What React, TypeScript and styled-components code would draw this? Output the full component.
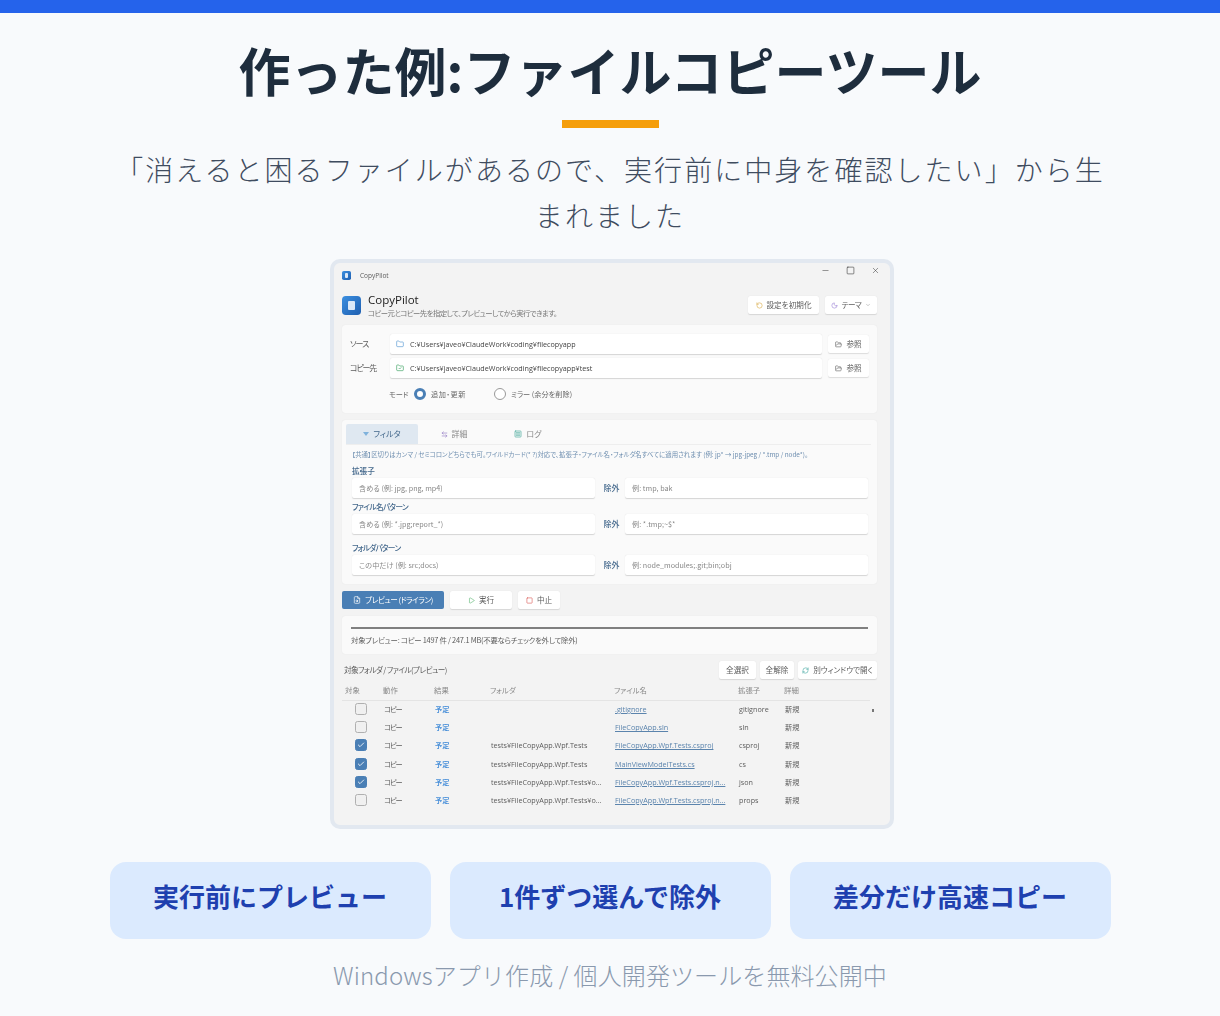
import React from "react";
import styled, { createGlobalStyle } from "styled-components";
import {
  ArrowLeftRight,
  Check,
  ChevronDown,
  FileSearch,
  Folder,
  FolderCheck,
  FolderOpen,
  Minus,
  Moon,
  Play,
  RefreshCw,
  RotateCcw,
  Square,
  SquareMenu,
  X,
} from "lucide-react";

const Global = createGlobalStyle`
  html, body {
    margin: 0;
    background: #f8fafc;
    font-family: "Noto Sans CJK JP", "Noto Sans", sans-serif;
  }
`;

const Page = styled.div`
  height: 1016px;
  overflow: hidden;
  box-sizing: border-box;
  border-top: 13px solid #2563eb;
  display: flex;
  flex-direction: column;
  align-items: center;
`;

const Title = styled.h1`
  margin: 23px 0 0;
  font-size: 52px;
  line-height: 68px;
  font-weight: 700;
  color: #1e2d3d;
`;

const Accent = styled.div`
  width: 97px;
  height: 8px;
  margin-top: 16px;
  background: #f59e0b;
`;

const Lead = styled.p`
  width: 1000px;
  margin: 18px 0 0;
  text-align: center;
  font-size: 28px;
  line-height: 46px;
  letter-spacing: 2.05px;
  font-weight: 300;
  color: #3f4c5f;
`;

const Shot = styled.div`
  width: 564px;
  height: 570px;
  box-sizing: border-box;
  margin: 21px 0 0 4px;
  border: 4px solid #e2e8f0;
  border-radius: 10px;
  background: #f3f3f3;
  color: #5c5c5c;
  font-size: 8px;
  line-height: 12px;
  font-feature-settings: "palt";
  display: flex;
  flex-direction: column;
  padding: 0 13px 0 8px;
  overflow: hidden;
  filter: blur(0.3px);
`;

const Kana = styled.span<{ $ls: number }>`
  letter-spacing: ${(p) => p.$ls}px;
  white-space: nowrap;
`;

const TitleBar = styled.div`
  height: 25px;
  flex: none;
  display: flex;
  align-items: center;
  gap: 9px;
  font-size: 6.5px;
  font-family: "Open Sans", sans-serif;
`;

const WindowButtons = styled.div`
  margin-left: auto;
  margin-right: -3px;
  margin-top: -11px;
  display: flex;
  gap: 16px;
  color: #222;
`;

const AppIcon = styled.div<{ $size: number }>`
  width: ${(p) => p.$size}px;
  height: ${(p) => p.$size}px;
  flex: none;
  border-radius: ${(p) => p.$size / 5}px;
  background: linear-gradient(135deg, #3b8fe0, #1f5fb0);
  display: flex;
  align-items: center;
  justify-content: center;
  &::after {
    content: "";
    width: 40%;
    height: 52%;
    background: #dbe9f8;
    border-radius: 1px;
  }
`;

const Header = styled.div`
  height: 29px;
  flex: none;
  margin-top: 8px;
  display: flex;
  gap: 7px;
  align-items: flex-start;
`;

const HeaderText = styled.div`
  margin-top: -3px;
`;

const AppName = styled.div`
  font-size: 11.5px;
  line-height: 14px;
  color: #222;
  font-family: "Open Sans", sans-serif;
`;

const AppSub = styled.div`
  font-size: 7.4px;
  line-height: 11px;
  letter-spacing: -0.55px;
  color: #777;
`;

const HeaderActions = styled.div`
  margin-left: auto;
  display: flex;
  gap: 6px;
`;

const Btn = styled.div<{ $w: number; $h?: number }>`
  width: ${(p) => p.$w}px;
  height: ${(p) => p.$h ?? 18}px;
  box-sizing: border-box;
  display: flex;
  flex: none;
  align-items: center;
  justify-content: center;
  gap: 4px;
  background: #fff;
  border-radius: 2px;
  font-size: 7.6px;
  color: #5c5c5c;
  white-space: nowrap;
  box-shadow: 0 0.5px 1px rgba(0, 0, 0, 0.12);
`;

const PrimaryBtn = styled(Btn)`
  background: #4a7fb5;
  color: #fff;
  box-shadow: none;
`;

const Panel = styled.div`
  flex: none;
  background: #fafafa;
  border-radius: 3px;
  box-shadow: 0 0 1px rgba(0, 0, 0, 0.1);
`;

const SourcePanel = styled(Panel)`
  height: 88px;
  box-sizing: border-box;
  padding: 9px 8px 0;
  display: flex;
  flex-direction: column;
  gap: 4px;
`;

const PathRow = styled.div`
  display: flex;
  align-items: center;
`;

const PathLabel = styled.div`
  width: 40px;
  flex: none;
`;

const PathInput = styled.div`
  flex: 1;
  height: 20px;
  margin-right: 6px;
  padding-left: 6px;
  display: flex;
  align-items: center;
  gap: 6px;
  background: #fff;
  border-radius: 2px;
  box-shadow: 0 0.5px 1px rgba(0, 0, 0, 0.15);
  font-family: "Open Sans", sans-serif;
  font-size: 7.2px;
  color: #444;
`;

const ModeRow = styled.div`
  display: flex;
  align-items: center;
  margin: 6px 0 0 39px;
  font-size: 7.2px;
  color: #666;
`;

const ModeLabel = styled.span`
  width: 25px;
`;

const Radio = styled.span<{ $on?: boolean }>`
  width: 12px;
  height: 12px;
  box-sizing: border-box;
  border-radius: 50%;
  margin-right: 5px;
  background: #fff;
  border: ${(p) => (p.$on ? "3px solid #4a7fb5" : "1px solid #999")};
`;

const ModeOption = styled.span`
  width: 63px;
  letter-spacing: 0.5px;
`;

const FilterPanel = styled(Panel)`
  height: 164px;
  margin-top: 7px;
  padding: 4px 9px 0 4px;
  box-sizing: border-box;
`;

const Tabs = styled.div`
  display: flex;
  height: 20px;
  border-bottom: 1px solid #eee;
  margin-right: -3px;
`;

const Tab = styled.div<{ $on?: boolean; $w: number }>`
  width: ${(p) => p.$w}px;
  display: flex;
  align-items: center;
  justify-content: center;
  gap: 4px;
  background: ${(p) => (p.$on ? "#dfe8f1" : "transparent")};
  color: ${(p) => (p.$on ? "#44688c" : "#888")};
  border-radius: 2px 2px 0 0;
`;

const FilterBody = styled.div`
  padding-left: 6px;
`;

const Info = styled.div`
  margin-top: 5px;
  font-size: 6.4px;
  line-height: 10px;
  color: #6f8fb0;
  white-space: nowrap;
`;

const GroupLabel = styled.div<{ $top: number; $ls: number }>`
  margin-top: ${(p) => p.$top}px;
  height: 11px;
  font-size: 7.6px;
  line-height: 11px;
  font-weight: 500;
  letter-spacing: ${(p) => p.$ls}px;
  color: #44688c;
`;

const InputRow = styled.div`
  display: flex;
  align-items: center;
  margin-top: 2px;
`;

const Field = styled.div<{ $w: number }>`
  width: ${(p) => p.$w}px;
  height: 20px;
  box-sizing: border-box;
  padding-left: 7px;
  display: flex;
  align-items: center;
  background: #fff;
  border-radius: 2px;
  box-shadow: 0 0.5px 1px rgba(0, 0, 0, 0.15);
  font-size: 7.2px;
  color: #888;
`;

const Exclude = styled.div`
  width: 30px;
  box-sizing: border-box;
  padding-left: 3px;
  text-align: center;
  font-weight: 500;
  color: #44688c;
`;

const ActionRow = styled.div`
  display: flex;
  gap: 6px;
  margin-top: 7px;
  flex: none;
`;

const ProgressPanel = styled(Panel)`
  height: 38px;
  margin-top: 7px;
  padding: 11px 9px 0;
  box-sizing: border-box;
`;

const ProgressBar = styled.div`
  height: 2px;
  background: #808080;
`;

const ProgressText = styled.div`
  margin-top: 5px;
  font-size: 7.4px;
  letter-spacing: -0.25px;
  white-space: nowrap;
`;

const ListHeader = styled.div`
  display: flex;
  align-items: center;
  gap: 4px;
  height: 18px;
  margin-top: 7px;
  padding-left: 2px;
  flex: none;
`;

const ListTitle = styled.div`
  margin-right: auto;
  font-size: 7.6px;
  letter-spacing: -0.55px;
`;

const Grid = styled.div`
  display: grid;
  grid-template-columns: 38px 51px 56px 124px 124px 46px 1fr;
  margin-right: 7px;
  padding-left: 3px;
  white-space: nowrap;
`;

const HeadRow = styled(Grid)`
  height: 21px;
  flex: none;
  align-items: center;
  border-bottom: 1px solid #e4e4e4;
  color: #888;
  font-size: 7.4px;
`;

const Row = styled(Grid)`
  height: 18.2px;
  align-items: center;
  font-size: 7.2px;
  color: #5c5c5c;
`;

const Rows = styled.div`
  flex: none;
  margin-top: -1px;
  position: relative;
`;

const Cell = styled.div`
  padding-left: 1px;
  font-family: "Open Sans", "Noto Sans CJK JP", sans-serif;
`;

const RowCheck = styled.div<{ $on?: boolean }>`
  width: 12px;
  height: 12px;
  margin-left: 10px;
  box-sizing: border-box;
  border-radius: 2.5px;
  background: ${(p) => (p.$on ? "#4a7fb5" : "#f0f0f0")};
  border: 1.2px solid ${(p) => (p.$on ? "#4a7fb5" : "#b0b0b0")};
  color: #fff;
  display: flex;
  align-items: center;
  justify-content: center;
`;

const Status = styled.div`
  font-weight: 700;
  color: #4a90d9;
  padding-left: 1px;
`;

const FileLink = styled(Cell)`
  color: #5b84ad;
  text-decoration: underline;
`;

const ScrollDot = styled.div`
  position: absolute;
  right: 3px;
  top: 9px;
  width: 2px;
  height: 3px;
  background: #777;
`;

const Features = styled.div`
  display: flex;
  gap: 19px;
  margin-top: 33px;
  width: 1001px;
  flex: none;
`;

const Feature = styled.div`
  flex: 1;
  height: 77px;
  box-sizing: border-box;
  padding-bottom: 10px;
  display: flex;
  align-items: center;
  justify-content: center;
  border-radius: 16px;
  background: #dbeafe;
  color: #1e40af;
  font-size: 26px;
  font-weight: 700;
`;

const Footer = styled.div`
  margin-top: 18px;
  font-size: 24px;
  line-height: 36px;
  letter-spacing: 0.1px;
  font-weight: 300;
  color: #8a99ae;
`;

const rows = [
  { on: false, folder: "", file: ".gitignore", ext: "gitignore" },
  { on: false, folder: "", file: "FileCopyApp.sln", ext: "sln" },
  { on: true, folder: "tests¥FileCopyApp.Wpf.Tests", file: "FileCopyApp.Wpf.Tests.csproj", ext: "csproj" },
  { on: true, folder: "tests¥FileCopyApp.Wpf.Tests", file: "MainViewModelTests.cs", ext: "cs" },
  { on: true, folder: "tests¥FileCopyApp.Wpf.Tests¥o...", file: "FileCopyApp.Wpf.Tests.csproj.n...", ext: "json" },
  { on: false, folder: "tests¥FileCopyApp.Wpf.Tests¥o...", file: "FileCopyApp.Wpf.Tests.csproj.n...", ext: "props" },
];

const filters = [
  { label: "拡張子", top: 5, ls: 0, include: "含める (例: jpg, png, mp4)", exclude: "例: tmp, bak" },
  { label: "ファイル名パターン", top: 3, ls: -0.6, include: "含める (例: *.jpg;report_*)", exclude: "例: *.tmp;~$*" },
  { label: "フォルダパターン", top: 7.5, ls: -0.7, include: "この中だけ (例: src;docs)", exclude: "例: node_modules;.git;bin;obj" },
];

export default function App() {
  return (
    <Page>
      <Global />
      <Title>作った例:ファイルコピーツール</Title>
      <Accent />
      <Lead>「消えると困るファイルがあるので、実行前に中身を確認したい」から生まれました</Lead>

      <Shot>
        <TitleBar>
          <AppIcon $size={9} />
          CopyPilot
          <WindowButtons>
            <Minus size={9} strokeWidth={1.2} />
            <Square size={9} strokeWidth={1.4} />
            <X size={9} strokeWidth={1.2} />
          </WindowButtons>
        </TitleBar>
        <Header>
          <AppIcon $size={19} />
          <HeaderText>
            <AppName>CopyPilot</AppName>
            <AppSub>コピー元とコピー先を指定して、プレビューしてから実行できます。</AppSub>
          </HeaderText>
          <HeaderActions>
            <Btn $w={71}>
              <RotateCcw size={7} color="#d9a83f" />
              設定を初期化
            </Btn>
            <Btn $w={52}>
              <Moon size={7} color="#9a7fd6" />
              <Kana $ls={-0.5}>テーマ</Kana>
              <ChevronDown size={6} color="#999" />
            </Btn>
          </HeaderActions>
        </Header>

        <SourcePanel>
          <PathRow>
            <PathLabel>
              <Kana $ls={-1}>ソース</Kana>
            </PathLabel>
            <PathInput>
              <Folder size={8} color="#5b9bd5" />
              C:¥Users¥javeo¥ClaudeWork¥coding¥filecopyapp
            </PathInput>
            <Btn $w={41}>
              <FolderOpen size={7} />
              参照
            </Btn>
          </PathRow>
          <PathRow>
            <PathLabel>
              <Kana $ls={-1.2}>コピー先</Kana>
            </PathLabel>
            <PathInput>
              <FolderCheck size={8} color="#3fa565" />
              C:¥Users¥javeo¥ClaudeWork¥coding¥filecopyapp¥test
            </PathInput>
            <Btn $w={41}>
              <FolderOpen size={7} />
              参照
            </Btn>
          </PathRow>
          <ModeRow>
            <ModeLabel>モード</ModeLabel>
            <Radio $on />
            <ModeOption>追加・更新</ModeOption>
            <Radio />
            ミラー (余分を削除)
          </ModeRow>
        </SourcePanel>

        <FilterPanel>
          <Tabs>
            <Tab $on $w={72}>
              <svg width="6" height="6" viewBox="0 0 6 6">
                <path d="M0 1h6L3 5z" fill="#7fb2dc" />
              </svg>
              フィルタ
            </Tab>
            <Tab $w={72}>
              <ArrowLeftRight size={7} color="#8a6fc0" />
              詳細
            </Tab>
            <Tab $w={76}>
              <SquareMenu size={8} color="#45a99b" />
              ログ
            </Tab>
          </Tabs>
          <FilterBody>
            <Info>
              【共通】区切りはカンマ / セミコロンどちらでも可。ワイルドカード(* ?)対応で、拡張子・ファイル名・フォルダ名すべてに適用されます (例: jp* → jpg-jpeg / *.tmp / node*)。
            </Info>
            {filters.map((f) => (
              <div key={f.label}>
                <GroupLabel $top={f.top} $ls={f.ls}>
                  {f.label}
                </GroupLabel>
                <InputRow>
                  <Field $w={243}>{f.include}</Field>
                  <Exclude>除外</Exclude>
                  <Field $w={243}>{f.exclude}</Field>
                </InputRow>
              </div>
            ))}
          </FilterBody>
        </FilterPanel>

        <ActionRow>
          <PrimaryBtn $w={102}>
            <FileSearch size={8} />
            <Kana $ls={-0.5}>プレビュー (ドライラン)</Kana>
          </PrimaryBtn>
          <Btn $w={62}>
            <Play size={7} color="#58b56f" />
            実行
          </Btn>
          <Btn $w={42}>
            <Square size={7} color="#d9534f" />
            中止
          </Btn>
        </ActionRow>

        <ProgressPanel>
          <ProgressBar />
          <ProgressText>対象プレビュー: コピー 1497 件 / 247.1 MB(不要ならチェックを外して除外)</ProgressText>
        </ProgressPanel>

        <ListHeader>
          <ListTitle>対象フォルダ / ファイル(プレビュー)</ListTitle>
          <Btn $w={37}>全選択</Btn>
          <Btn $w={34}>全解除</Btn>
          <Btn $w={79}>
            <RefreshCw size={7} color="#3fa5a0" />
            別ウィンドウで開く
          </Btn>
        </ListHeader>

        <HeadRow>
          <div>対象</div>
          <div>動作</div>
          <div>結果</div>
          <div>フォルダ</div>
          <div>ファイル名</div>
          <div>拡張子</div>
          <div>詳細</div>
        </HeadRow>
        <Rows>
          <ScrollDot />
          {rows.map((r, i) => (
            <Row key={i}>
              <RowCheck $on={r.on}>{r.on && <Check size={8} strokeWidth={2.5} />}</RowCheck>
              <Cell>
                <Kana $ls={-1}>コピー</Kana>
              </Cell>
              <Status>予定</Status>
              <Cell>{r.folder}</Cell>
              <FileLink>{r.file}</FileLink>
              <Cell>{r.ext}</Cell>
              <Cell>新規</Cell>
            </Row>
          ))}
        </Rows>
      </Shot>

      <Features>
        <Feature>実行前にプレビュー</Feature>
        <Feature>1件ずつ選んで除外</Feature>
        <Feature>差分だけ高速コピー</Feature>
      </Features>
      <Footer>Windowsアプリ作成 / 個人開発ツールを無料公開中</Footer>
    </Page>
  );
}
